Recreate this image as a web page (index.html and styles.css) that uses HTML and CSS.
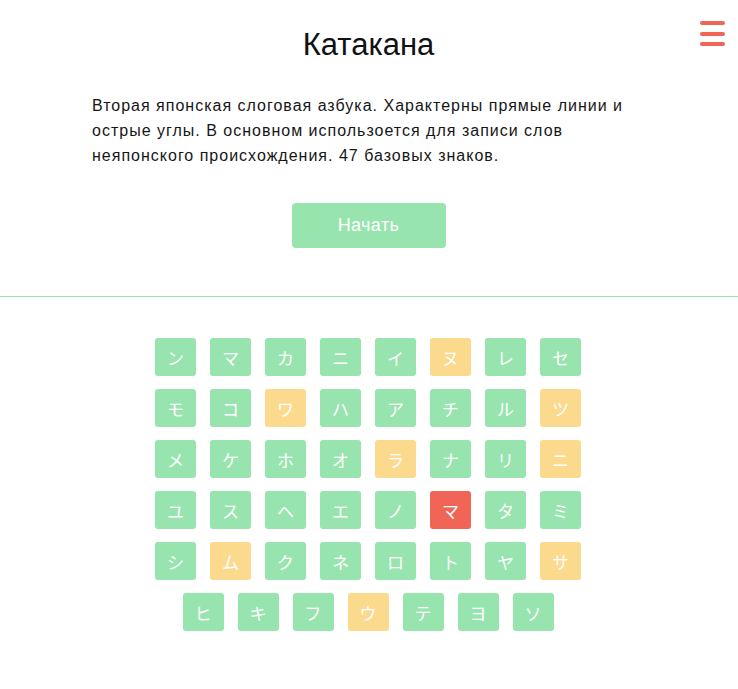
FILE: index.html
```html
<!DOCTYPE html>
<html lang="ru">
<head>
<meta charset="utf-8">
<title>Катакана</title>
<link rel="stylesheet" href="styles.css">
</head>
<body>
<header class="intro">
  <button class="menu" aria-label="Меню">
    <span class="menu-bar"></span>
    <span class="menu-bar"></span>
    <span class="menu-bar"></span>
  </button>
  <h1 class="title">Катакана</h1>
  <p class="desc">Вторая японская слоговая азбука. Характерны прямые линии и<br>острые углы. В основном использоется для записи слов<br>неяпонского происхождения. 47 базовых знаков.</p>
  <div class="actions"><button class="start">Начать</button></div>
</header>
<main class="board">
  <div class="tiles">
    <span class="tile">ン</span><span class="tile">マ</span><span class="tile">カ</span><span class="tile">ニ</span><span class="tile">イ</span><span class="tile warn">ヌ</span><span class="tile">レ</span><span class="tile">セ</span>
    <span class="tile">モ</span><span class="tile">コ</span><span class="tile warn">ワ</span><span class="tile">ハ</span><span class="tile">ア</span><span class="tile">チ</span><span class="tile">ル</span><span class="tile warn">ツ</span>
    <span class="tile">メ</span><span class="tile">ケ</span><span class="tile">ホ</span><span class="tile">オ</span><span class="tile warn">ラ</span><span class="tile">ナ</span><span class="tile">リ</span><span class="tile warn">ニ</span>
    <span class="tile">ユ</span><span class="tile">ス</span><span class="tile">ヘ</span><span class="tile">エ</span><span class="tile">ノ</span><span class="tile bad">マ</span><span class="tile">タ</span><span class="tile">ミ</span>
    <span class="tile">シ</span><span class="tile warn">ム</span><span class="tile">ク</span><span class="tile">ネ</span><span class="tile">ロ</span><span class="tile">ト</span><span class="tile">ヤ</span><span class="tile warn">サ</span>
    <span class="tile">ヒ</span><span class="tile">キ</span><span class="tile">フ</span><span class="tile warn">ウ</span><span class="tile">テ</span><span class="tile">ヨ</span><span class="tile">ソ</span>
  </div>
</main>
</body>
</html>
```
FILE: styles.css
```css
* { box-sizing: border-box; }
html, body { margin: 0; padding: 0; background: #fff; }
body {
  font-family: "Liberation Sans", Arial, sans-serif;
  color: #161616;
}
.intro {
  position: relative;
  padding: 27px 0 48px;
  border-bottom: 1px solid #98e3ae;
}
.menu {
  position: absolute;
  top: 21px;
  right: 13px;
  width: 25px;
  padding: 0;
  border: 0;
  background: none;
  display: flex;
  flex-direction: column;
  gap: 6.5px;
  cursor: pointer;
}
.menu-bar {
  display: block;
  height: 4px;
  border-radius: 2px;
  background: #f06555;
}
.title {
  margin: 0;
  text-align: center;
  font-weight: normal;
  font-size: 31px;
  line-height: 36px;
  padding-right: 1px;
  color: #111;
}
.desc {
  margin: 30px 0 0;
  padding: 0 20px 0 92px;
  font-size: 16px;
  letter-spacing: 1px;
  line-height: 25px;
}
.actions {
  margin-top: 35px;
  display: flex;
  justify-content: center;
  padding-right: 1px;
}
.start {
  width: 154px;
  height: 45px;
  border: 0;
  border-radius: 4px;
  background: #98e4ae;
  color: #fff;
  font-family: "Liberation Sans", Arial, sans-serif;
  font-size: 18px;
  letter-spacing: 0.4px;
  padding: 0;
}
.board {
  padding: 41px 0 40px;
}
.tiles {
  width: 442px;
  margin: 0 auto;
  padding-right: 2px;
  display: flex;
  flex-wrap: wrap;
  justify-content: center;
  row-gap: 13px;
}
.tile {
  width: 41px;
  height: 38px;
  margin: 0 7px;
  border-radius: 3px;
  background: #98e4ae;
  color: #fff;
  display: flex;
  align-items: center;
  justify-content: center;
  font-family: "Noto Sans CJK JP", sans-serif;
  font-size: 17px;
}
.tile.warn { background: #fbd98d; }
.tile.bad { background: #f06555; }
```
